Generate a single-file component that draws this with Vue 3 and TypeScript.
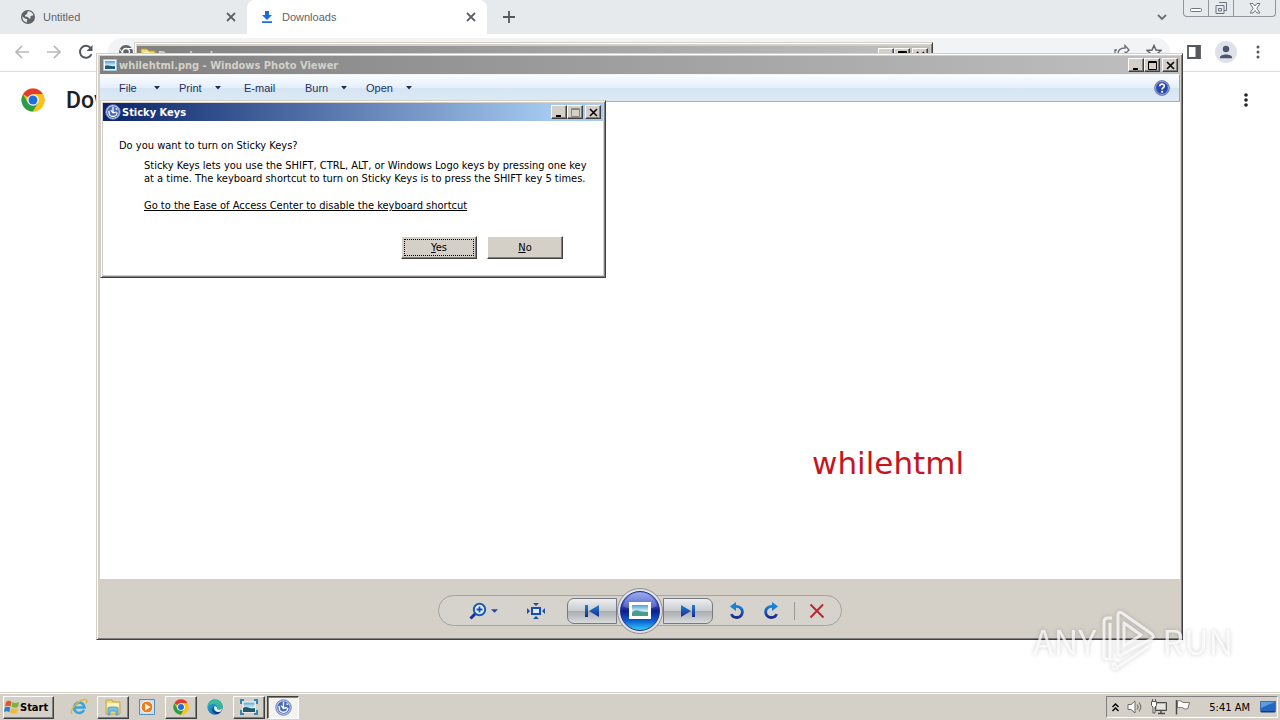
<script setup lang="ts">
interface MenuItem {
  label: string
  arrow: boolean
}

interface TaskItem {
  name: string
  icon: 'ie' | 'explorer' | 'media' | 'chrome' | 'edge' | 'photo' | 'access'
  state: 'pinned' | 'open' | 'active'
}

const menu: MenuItem[] = [
  { label: 'File', arrow: true },
  { label: 'Print', arrow: true },
  { label: 'E-mail', arrow: false },
  { label: 'Burn', arrow: true },
  { label: 'Open', arrow: true },
]

const tasks: TaskItem[] = [
  { name: 'Internet Explorer', icon: 'ie', state: 'pinned' },
  { name: 'Windows Explorer', icon: 'explorer', state: 'open' },
  { name: 'Media Player', icon: 'media', state: 'pinned' },
  { name: 'Chrome', icon: 'chrome', state: 'open' },
  { name: 'Edge', icon: 'edge', state: 'pinned' },
  { name: 'Photo Viewer', icon: 'photo', state: 'open' },
  { name: 'Sticky Keys', icon: 'access', state: 'active' },
]
</script>

<template>
  <div class="desktop">
    <svg width="0" height="0" class="defs" aria-hidden="true">
      <defs>
        <linearGradient id="orb" x1="0" y1="0" x2="0" y2="1">
          <stop offset="0" stop-color="#8a9bea" />
          <stop offset=".35" stop-color="#3346c4" />
          <stop offset=".5" stop-color="#101d8c" />
          <stop offset=".75" stop-color="#0a5fd0" />
          <stop offset="1" stop-color="#35d0ff" />
        </linearGradient>
        <linearGradient id="ink" x1="0" y1="0" x2="0" y2="1">
          <stop offset="0" stop-color="#1a80d8" />
          <stop offset="1" stop-color="#1b2a8c" />
        </linearGradient>
        <linearGradient id="pic" x1="0" y1="0" x2="0" y2="1">
          <stop offset="0" stop-color="#4d9ed6" />
          <stop offset=".55" stop-color="#d5edf5" />
          <stop offset="1" stop-color="#2c7384" />
        </linearGradient>
        <linearGradient id="edgeg" x1="0" y1="0" x2="1" y2="1">
          <stop offset="0" stop-color="#2bb6d8" />
          <stop offset="1" stop-color="#0c4fa8" />
        </linearGradient>
        <symbol id="chrome-logo" viewBox="0 0 24 24">
          <circle cx="12" cy="12" r="11.5" fill="#fbc116" />
          <path d="M12 12 2.04 6.25A11.5 11.5 0 0 1 21.96 6.25H12z" fill="#e33b2e" />
          <path d="M2.04 6.25A11.5 11.5 0 0 0 12 23.5L17 14.9 12 12 7 14.9z" fill="#2a9c4a" />
          <path d="M12 6.25h9.96A11.5 11.5 0 0 1 12 23.5L17 14.9z" fill="#fbc116" />
          <circle cx="12" cy="12" r="5.8" fill="#fff" />
          <circle cx="12" cy="12" r="4.5" fill="#1b6fe0" />
        </symbol>
        <symbol id="access-logo" viewBox="0 0 18 18">
          <circle cx="9" cy="9" r="8.2" fill="#c3cdec" stroke="#6478b5" />
          <circle cx="9" cy="9" r="6.6" fill="#4a69b5" />
          <path d="M4.5 9.5a4.5 4.5 0 0 0 9 0" fill="none" stroke="#fff" stroke-width="1.5" />
          <path d="M9 3v6M6.5 7l2.5 3 4-1M4 7.5l1 2.5M12 5l2 1" fill="none" stroke="#fff" stroke-width="1.4" />
        </symbol>
        <symbol id="photo-logo" viewBox="0 0 14 12">
          <path d="M.5.5h13v11H.5z" fill="#f2f8fb" stroke="#b4c4cf" />
          <path d="M2 2h10v8H2z" fill="url(#pic)" />
          <path d="M2 7c3-2 5 1 10 0v3H2z" fill="#1d5c78" />
        </symbol>
      </defs>
    </svg>

    <!-- browser -->
    <section class="browser">
      <div class="tabs">
        <button class="tab">
          <svg width="16" height="16" viewBox="0 0 16 16"><circle cx="8" cy="8" r="7" fill="#5f6368" /><path d="M2.3 7.5 5 9.6c1 .5 2 .2 2.3 1.2.2.8-.6 1.4-.5 2.8C4 13 2.200 10.500 2.300 7.500zM8 2.200c2.500 0 4.700 1.600 5.500 3.800-.8.9-2.500.7-3 1.500-.6.8.8 2-.4 2.300C8.900 9.900 8.800 8.300 7.600 8 6.500 7.600 5 8 5 6.700c0-1 1.400-1 2-1.600.700-.700-.300-2 1-2.900z" fill="#e7eaed" /></svg>
          <span>Untitled</span>
          <svg class="x" width="10" height="10" viewBox="0 0 10 10"><path d="m1 1 8 8M9 1 1 9" stroke="#5f6368" stroke-width="1.8" /></svg>
        </button>
        <button class="tab active">
          <svg width="16" height="16" viewBox="0 0 16 16"><path d="M6 2h4v4h3L8 11 3 6h3zM3 12.300h10V14H3z" fill="#1a6fdc" /></svg>
          <span>Downloads</span>
          <svg class="x" width="10" height="10" viewBox="0 0 10 10"><path d="m1 1 8 8M9 1 1 9" stroke="#5f6368" stroke-width="1.800" /></svg>
        </button>
        <button class="newtab" aria-label="New tab"><svg width="12" height="12" viewBox="0 0 12 12"><path d="M6 0v12M0 6h12" stroke="#55595e" stroke-width="1.800" /></svg></button>
        <button class="chev" aria-label="Search tabs"><svg width="10" height="8" viewBox="0 0 10 8"><path d="m1 2 4 4 4-4" fill="none" stroke="#6a6e73" stroke-width="1.800" /></svg></button>
        <div class="caption">
          <button aria-label="Minimize"><svg width="14" height="16" viewBox="0 0 14 16"><rect x="1.500" y="8.500" width="11" height="3" rx="1" fill="#fff" stroke="#6d7580" /></svg></button>
          <button aria-label="Restore"><svg width="14" height="16" viewBox="0 0 14 16"><path d="M5 2.500h7.500v8H10M2 5.500h8v8H2zM4.500 8.500h3v2.500h-3z" fill="none" stroke="#6d7580" /></svg></button>
          <button class="wide" aria-label="Close"><svg width="14" height="16" viewBox="0 0 14 16"><path d="M2 3.500h3L7 6l2-2.500h3L8.800 8.200 12 13H9l-2-2.500L5 13H2l3.200-4.800z" fill="#fff" stroke="#6d7580" /></svg></button>
        </div>
      </div>
      <div class="nav">
        <button aria-label="Back"><svg width="16" height="16" viewBox="0 0 16 16"><path d="M15 8H2M8 2 2 8l6 6" fill="none" stroke="#b6b8ba" stroke-width="1.700" /></svg></button>
        <button aria-label="Forward"><svg width="16" height="16" viewBox="0 0 16 16"><path d="M1 8h13M8 2l6 6-6 6" fill="none" stroke="#b6b8ba" stroke-width="1.700" /></svg></button>
        <button aria-label="Reload"><svg width="16" height="16" viewBox="0 0 16 16"><path d="M13.500 10.200A6 6 0 1 1 12.600 4" fill="none" stroke="#55595e" stroke-width="2" /><path d="M14.500 1v6h-6z" fill="#55595e" /></svg></button>
        <div class="omnibox">
          <svg width="16" height="16" viewBox="0 0 16 16"><circle cx="8" cy="8" r="7" fill="#5f6368" /><circle cx="8" cy="8" r="3.500" fill="#5f6368" stroke="#fff" stroke-width="1.400" /><path d="M8 4.500h6.500M5 10 1.800 5M11 10l-3 5" stroke="#fff" /></svg>
          <span class="grow"></span>
          <svg width="16" height="16" viewBox="0 0 16 16"><path d="M3 6H1v8h11v-3M4 10c0-4 3-6 7-6V1.500L15 6l-4 4V7.500" fill="none" stroke="#6a6e73" stroke-width="1.300" /></svg>
          <svg width="16" height="16" viewBox="0 0 16 16"><path d="m8 1.500 2 4.500 5 .5-3.800 3.300 1.200 4.900L8 12l-4.400 2.700 1.200-4.900L1 6.500 6 6z" fill="none" stroke="#5f6368" stroke-width="1.500" /></svg>
        </div>
        <button aria-label="Side panel"><svg width="16" height="16" viewBox="0 0 16 16"><path d="M2 2h12v12H2z" fill="#fff" stroke="#55595e" stroke-width="1.800" /><path d="M9.500 2H14v12H9.500z" fill="#55595e" /></svg></button>
        <button class="avatar" aria-label="Profile"><svg width="22" height="22" viewBox="0 0 22 22"><circle cx="11" cy="11" r="11" fill="#dfe2e8" /><circle cx="11" cy="8" r="3.200" fill="#4c5670" /><path d="M5 16.500c0-4 12-4 12 0v.7H5z" fill="#4c5670" /></svg></button>
        <button aria-label="Menu"><svg width="16" height="16" viewBox="0 0 16 16"><g fill="#55595e"><circle cx="8" cy="3" r="1.500" /><circle cx="8" cy="8" r="1.500" /><circle cx="8" cy="13" r="1.500" /></g></svg></button>
      </div>
      <header class="page">
        <svg width="24" height="24"><use href="#chrome-logo" /></svg>
        <h1>Downloads</h1>
        <button aria-label="More actions"><svg width="16" height="16" viewBox="0 0 16 16"><g fill="#222"><circle cx="8" cy="3" r="1.800" /><circle cx="8" cy="8" r="1.800" /><circle cx="8" cy="13" r="1.800" /></g></svg></button>
      </header>
    </section>

    <!-- folder window -->
    <section class="win folder">
      <div class="titlebar idle">
        <svg width="16" height="14" viewBox="0 0 16 14"><path d="M1 1h6l2 2h6v11H1z" fill="#f3dc7c" stroke="#b99a34" /><path d="M4 4h5v9H4z" fill="#fff4b8" /></svg>
        <span>Downloads</span>
        <div class="sys">
          <button aria-label="Minimize"><svg width="9" height="9" viewBox="0 0 9 9"><path d="M1 7h5v2H1z" /></svg></button>
          <button aria-label="Maximize"><svg width="9" height="9" viewBox="0 0 9 9"><path d="M.5.5h8v8h-8zM0 1.500h9" fill="none" stroke="#000" /></svg></button>
          <button class="close" aria-label="Close"><svg width="9" height="9" viewBox="0 0 9 9"><path d="m1 1 7 7M8 1 1 8" stroke="#000" stroke-width="1.600" /></svg></button>
        </div>
      </div>
    </section>

    <!-- photo viewer -->
    <section class="win viewer">
      <div class="titlebar idle">
        <svg width="14" height="12"><use href="#photo-logo" /></svg>
        <span>whilehtml.png - Windows Photo Viewer</span>
        <div class="sys">
          <button aria-label="Minimize"><svg width="9" height="9" viewBox="0 0 9 9"><path d="M1 7h5v2H1z" /></svg></button>
          <button aria-label="Maximize"><svg width="9" height="9" viewBox="0 0 9 9"><path d="M.5.5h8v8h-8zM0 1.500h9" fill="none" stroke="#000" /></svg></button>
          <button class="close" aria-label="Close"><svg width="9" height="9" viewBox="0 0 9 9"><path d="m1 1 7 7M8 1 1 8" stroke="#000" stroke-width="1.600" /></svg></button>
        </div>
      </div>
      <nav class="menubar">
        <button v-for="item in menu" :key="item.label">
          <span>{{ item.label }}</span>
          <svg v-if="item.arrow" width="6" height="4" viewBox="0 0 6 4"><path d="M0 0h6L3 3.500z" fill="#1e2f55" /></svg>
        </button>
        <button class="help" aria-label="Help">
          <svg width="16" height="16" viewBox="0 0 16 16"><circle cx="8" cy="8" r="7.400" fill="#2a49ad" stroke="#7c88a8" /><circle cx="8" cy="8" r="6.400" fill="none" stroke="#b9c6ee" stroke-width=".8" /><path d="M5.700 6.200c0-3 4.800-2.700 4.600 0-.1 1.500-2.200 1.500-2.200 3.300" fill="none" stroke="#fff" stroke-width="1.700" /><circle cx="8.100" cy="11.800" r="1.100" fill="#fff" /></svg>
        </button>
      </nav>
      <div class="canvas"><p>whilehtml</p></div>
      <footer class="controls">
        <div class="pill">
          <button class="zoom" aria-label="Zoom">
            <svg width="18" height="18" viewBox="0 0 18 18"><path d="m1.500 16.500 5-5" stroke="#1c2f94" stroke-width="3" /><circle cx="10.500" cy="7.500" r="5.700" fill="#e4f0fb" stroke="#1c5cb8" stroke-width="2" /><path d="M10.500 4.500v6M7.500 7.500h6" stroke="#1c4fb0" stroke-width="1.800" /></svg>
            <svg width="7" height="4" viewBox="0 0 8 4"><path d="M0 0h8L4 4z" fill="#1e4aa5" /></svg>
          </button>
          <button class="fit" aria-label="Actual size"><svg width="18" height="16" viewBox="0 0 18 16"><path d="M5 5h8v6H5z" fill="#dcebfa" stroke="#1c4fb0" stroke-width="2" /><path d="M6 0h6L9 3zM6 16h6l-3-3zM0 5v6l3-3zM18 5v6l-3-3z" fill="#1f4fa8" /></svg></button>
          <button class="step prev" aria-label="Previous"><svg width="16" height="12" viewBox="0 0 16 12"><path d="M1 0h3v12H1zM15 0v12L5 6z" fill="url(#ink)" /></svg></button>
          <button class="orb" aria-label="Play slide show"><svg width="46" height="46" viewBox="0 0 46 46"><circle cx="23" cy="23" r="22.500" fill="#e2e3e6" stroke="#8b8e96" /><circle cx="23" cy="23" r="19.500" fill="url(#orb)" stroke="#26347e" /><path d="M6 18a17.500 17.500 0 0 1 34 0c-9 5-25 5-34 0z" fill="#fff" opacity=".22" /><path d="M12 14h22v17H12z" fill="#fff" /><path d="M15 17h16v11H15z" fill="url(#pic)" /><path d="M15 25c4-6 7 0 16-1v4H15z" fill="#4a9c8c" /></svg></button>
          <button class="step next" aria-label="Next"><svg width="16" height="12" viewBox="0 0 16 12"><path d="M12 0h3v12h-3zM1 0v12l10-6z" fill="url(#ink)" /></svg></button>
          <button aria-label="Rotate counterclockwise"><svg width="16" height="18" viewBox="0 0 16 18"><path d="M6 4.500c10-1 9 11 2 11-3 0-5-1.500-5.500-3.500" fill="none" stroke="url(#ink)" stroke-width="2.800" /><path d="M7 0v9L1 4.500z" fill="#1a80d8" /></svg></button>
          <button aria-label="Rotate clockwise"><svg width="16" height="18" viewBox="0 0 16 18"><path d="M10 4.500c-10-1-9 11-2 11 3 0 5-1.500 5.500-3.500" fill="none" stroke="url(#ink)" stroke-width="2.800" /><path d="M9 0v9l6-4.500z" fill="#1a80d8" /></svg></button>
          <span class="sep"></span>
          <button aria-label="Delete"><svg width="16" height="16" viewBox="0 0 16 16"><path d="m1.500 1.500 13 13M14 1.500l-12.500 13" stroke="#bd2831" stroke-width="2" /></svg></button>
        </div>
      </footer>
    </section>

    <!-- sticky keys dialog -->
    <section class="win dialog" role="dialog" aria-labelledby="sk-title">
      <div class="titlebar">
        <svg width="16" height="16"><use href="#access-logo" /></svg>
        <span id="sk-title">Sticky Keys</span>
        <div class="sys">
          <button aria-label="Minimize"><svg width="9" height="9" viewBox="0 0 9 9"><path d="M1 7h5v2H1z" /></svg></button>
          <button aria-label="Maximize" disabled><svg width="9" height="9" viewBox="0 0 9 9"><path d="M.5.500h8v8h-8zM0 1.500h9" fill="none" stroke="#8a8780" /></svg></button>
          <button class="close" aria-label="Close"><svg width="9" height="9" viewBox="0 0 9 9"><path d="m1 1 7 7M8 1 1 8" stroke="#000" stroke-width="1.600" /></svg></button>
        </div>
      </div>
      <div class="body">
        <p>Do you want to turn on Sticky Keys?</p>
        <div class="detail">
          <p>Sticky Keys lets you use the SHIFT, CTRL, ALT, or Windows Logo keys by pressing one key<br />at a time. The keyboard shortcut to turn on Sticky Keys is to press the SHIFT key 5 times.</p>
          <a href="#">Go to the Ease of Access Center to disable the keyboard shortcut</a>
        </div>
        <div class="actions">
          <button class="focused"><span><u>Y</u>es</span></button>
          <button><span><u>N</u>o</span></button>
        </div>
      </div>
    </section>

    <!-- taskbar -->
    <footer class="taskbar">
      <button class="start">
        <svg width="16" height="16" viewBox="0 0 16 16"><path d="M2 3c2-1.500 3.500-1.500 5.500-.3L6.500 7.500C4.500 6.300 3 6.500 1 7.500z" fill="#e2572a" /><path d="M8.500 3c2 1.200 4 1.200 6.500 0l-1 4.800c-2.500 1.200-4.500 1-6.500 0z" fill="#78b43c" /><path d="M.8 8.500c2-1.200 3.700-1 5.500 0l-1 4.800C3.500 12 2 12.200 0 13z" fill="#2f7cd0" /><path d="M7.300 9c2 1.200 4 1.200 6.500 0l-1 4.800c-2.500 1.200-4.500 1-6.500 0z" fill="#f2b92d" /></svg>
        <b>Start</b>
      </button>
      <div class="tasks">
        <button v-for="t in tasks" :key="t.name" :class="t.state" :aria-label="t.name">
          <svg v-if="t.icon === 'ie'" width="18" height="18" viewBox="0 0 18 18"><path d="M14 12a5.200 5.200 0 1 1 .5-2.500H5" fill="none" stroke="#35a5e0" stroke-width="2.600" /><path d="M2 16C-1 12 9 1 16 1.500c1.500.5 1 2.500 0 4" fill="none" stroke="#e3b52e" stroke-width="1.300" /></svg>
          <svg v-else-if="t.icon === 'explorer'" width="18" height="18" viewBox="0 0 18 18"><path d="M2 2h6l1 2h7v12H2z" fill="#efd67a" stroke="#c6a64a" /><path d="M3 5h12v4H3z" fill="#fff3bd" /><path d="M4 17v-6q0-2 2-2h6q2 0 2 2v6h-2v-4H6v4z" fill="#77bfe6" stroke="#4b97c4" stroke-width=".8" /></svg>
          <svg v-else-if="t.icon === 'media'" width="16" height="16" viewBox="0 0 16 16"><path d="M.5.500h15v15H.500z" fill="#c9dff0" stroke="#4f8fc2" /><circle cx="8" cy="8" r="6" fill="#ef7b1a" stroke="#fff" /><path d="M6 4.500v7L11.500 8z" fill="#fff" /></svg>
          <svg v-else-if="t.icon === 'chrome'" width="16" height="16"><use href="#chrome-logo" /></svg>
          <svg v-else-if="t.icon === 'edge'" width="16" height="16" viewBox="0 0 16 16"><circle cx="8" cy="8" r="7.700" fill="url(#edgeg)" /><path d="M1 6c2-6 14-8 14.700 1.500 0 3-3.500 3.700-5.500 2.500C11 7.500 9 5 6 5 3.500 5 1.500 6 .5 8z" fill="#46c88c" opacity=".75" /><path d="M6.500 8c-1 4 3 6 7.500 4.500-1 1-2 2-4 2.500C5 14 4 9.500 6.500 8z" fill="#0b3b86" /><path d="M7 8.500c.5-2 3-1.500 3.200 1.500 1.500 1 3.500.8 5-.5l-1.500 3c-3 1.300-6.500 0-6.700-4z" fill="#e5f4fa" /></svg>
          <svg v-else-if="t.icon === 'photo'" width="18" height="16" viewBox="0 0 18 16"><path d="M0 0h4v2H2v3H0zM14 0h4v5h-2V2h-2zM0 11h2v3h2v2H0zM16 11h2v5h-4v-2h2z" fill="#3489ad" /><path d="M3 3h12v10H3z" fill="url(#pic)" stroke="#fff" /><path d="M3 9c4-3 7 2 12 0v4H3z" fill="#205b70" /></svg>
          <svg v-else width="17" height="17"><use href="#access-logo" /></svg>
        </button>
      </div>
      <div class="tray">
        <svg width="7" height="9" viewBox="0 0 7 9"><path d="m.5 4 3-3 3 3M.5 8l3-3 3 3" fill="none" stroke="#000" stroke-width="1.400" /></svg>
        <svg width="16" height="16" viewBox="0 0 16 16"><path d="M1 5.500h3L8 2v12l-4-3.500H1z" fill="#fff" stroke="#6c6a66" /><path d="M10 5.500q2 2.500 0 5M12 3.500q3.500 4.500 0 9" fill="none" stroke="#77746e" stroke-width="1.200" /></svg>
        <svg width="16" height="16" viewBox="0 0 16 16"><path d="M4.500 3.500h11v8h-11z" fill="#b9b6b0" stroke="#4d4b48" /><path d="M6 5h8v5H6z" fill="#e8e6e1" /><path d="M7 14.500h7M10 12v2" stroke="#4d4b48" stroke-width="1.500" /><path d="M.500 2.500h5v4L4 8v6H2V8L.500 6.500zM1.500 0v3M4.500 0v3" fill="#fff" stroke="#5b5955" /></svg>
        <svg width="16" height="16" viewBox="0 0 16 16"><path d="M1.500 1v14.500" stroke="#4d4b48" stroke-width="1.500" /><path d="M2.500 2c3-1 4 .5 5.500 1.500h6.500L13 9.500c-2 .7-3.500.8-5-.5-2-1-3.500-.8-5.500 0z" fill="#fff" stroke="#77746e" /></svg>
        <time>5:41 AM</time>
        <svg width="16" height="14" viewBox="0 0 16 14"><path d="M.5 1.500h15v10H.5z" fill="#2367bf" stroke="#4c6ea0" /><path d="M1 2h14L1 8z" fill="#5c9be0" /><path d="M1 11h14v1.500H1z" fill="#173a72" /></svg>
      </div>
    </footer>

    <div class="watermark" aria-hidden="true">
      <span>ANY</span>
      <svg width="58" height="64" viewBox="0 0 58 64"><path d="M12 9H8q-4 0-4 4v34q0 3 3 3h3V14M18 6q0-4 4-2l30 21q3 3-1 5L21 46q-3 1-3-2zM24 14v23l17-11zM13 54l5 4 31-21M13 54v5q2 2 5 0" fill="none" stroke="#fff" stroke-opacity=".75" stroke-width="3" stroke-linejoin="round" /></svg>
      <span>RUN</span>
    </div>
  </div>
</template>

<style>
html,
body {
  margin: 0;
  background: #fff;
}
</style>

<style scoped>
* {
  box-sizing: border-box;
}
.desktop {
  position: relative;
  display: flex;
  flex-direction: column;
  min-height: 100vh;
  overflow: hidden;
  background: #fff;
  color: #000;
  font-family: "DejaVu Sans Condensed", "DejaVu Sans", sans-serif;
  font-size: 11px;
}
.defs {
  position: absolute;
}
button {
  display: flex;
  align-items: center;
  justify-content: center;
  margin: 0;
  padding: 0;
  border: 0;
  background: none;
  color: inherit;
  font: inherit;
}
svg {
  display: block;
  flex: none;
}
p,
h1 {
  margin: 0;
}

.browser {
  flex: 1;
  font-family: "Liberation Sans", Arial, sans-serif;
}
.tabs {
  display: flex;
  align-items: center;
  height: 34px;
  background: #e7eaed;
}
.tab {
  justify-content: flex-start;
  gap: 7px;
  width: 240px;
  height: 34px;
  padding: 0 11px 0 12px;
  color: #5f6368;
}
.tab:first-child {
  width: 247px;
  padding-left: 20px;
}
.tab.active {
  border-radius: 8px 8px 0 0;
  background: #fff;
}
.x {
  margin-left: auto;
}
.newtab {
  width: 44px;
}
.chev {
  margin-left: auto;
  margin-right: 16px;
}
.caption {
  display: flex;
  align-self: flex-start;
  height: 17px;
  margin-right: 4px;
  border: 1px solid #8f969e;
  border-top: 0;
  border-radius: 0 0 4px 4px;
}
.caption button {
  width: 25px;
  border-right: 1px solid #8f969e;
}
.caption .wide {
  width: 41px;
  border-right: 0;
}
.nav {
  display: flex;
  align-items: center;
  gap: 16px;
  height: 38px;
  padding: 0 14px 2px;
  border-bottom: 1px solid #dadce0;
}
.omnibox {
  display: flex;
  flex: 1;
  align-items: center;
  gap: 16px;
  height: 28px;
  margin-left: -2px;
  padding: 0 8px 0 10px;
  border-radius: 14px;
  background: #f1f3f4;
}
.grow {
  flex: 1;
}
.avatar {
  margin: 0 -3px;
}
.page {
  display: flex;
  align-items: center;
  gap: 21px;
  height: 56px;
  padding: 0 26px 0 21px;
}
.page h1 {
  flex: 1;
  color: #202124;
  font: 500 23px Roboto, sans-serif;
}

.win {
  position: absolute;
  display: flex;
  flex-direction: column;
  padding: 2px;
  border: 1px solid;
  border-color: #d4d0c8 #404040 #404040 #d4d0c8;
  background: #d4d0c8;
  box-shadow: inset 1px 1px #fff, inset -1px -1px #808080;
}
.folder {
  top: 42px;
  right: 347px;
  left: 134px;
  height: 120px;
  padding-top: 3px;
}
.viewer {
  top: 53px;
  right: 97px;
  bottom: 80px;
  left: 96px;
  padding: 2px 2px 1px 3px;
}
.titlebar {
  display: flex;
  flex: none;
  align-items: center;
  gap: 2px;
  height: 18px;
  padding: 0 2px 0 3px;
  background: linear-gradient(90deg, #0a246a, #a6caf0 90%);
  color: #fff;
  font-weight: bold;
}
.idle {
  background: linear-gradient(90deg, #808080, #c0c0c0);
  color: #d4d0c8;
}
.dialog .titlebar {
  gap: 1px;
  padding-left: 2px;
}
.sys {
  display: flex;
  margin-left: auto;
}
.sys button {
  width: 16px;
  height: 14px;
  border: 1px solid;
  border-color: #fff #404040 #404040 #fff;
  background: #d4d0c8;
  box-shadow: inset -1px -1px #808080;
}
.sys .close {
  margin-left: 2px;
}
.menubar {
  display: grid;
  flex: none;
  grid-template-columns: 60px 65px 61px 61px 61px 1fr;
  height: 28px;
  padding: 0 9px 1px 19px;
  border-top: 1px solid #f4f4f4;
  border-right: 1px solid #98a8ba;
  border-bottom: 1px solid #a0afc3;
  background: linear-gradient(#fafdff, #e5effa 48%, #d6e5f3 52%, #dce9f5);
  color: #1e3264;
  font-family: "Liberation Sans", Arial, sans-serif;
}
.menubar button {
  justify-content: flex-start;
  gap: 13px;
}
.menubar span {
  min-width: 22px;
  text-align: left;
}
.menubar .help {
  justify-self: end;
}
.canvas {
  display: flex;
  flex: 1;
  align-items: flex-end;
  justify-content: flex-end;
  padding: 0 20% 96px 0;
  background: #fff;
}
.canvas p {
  color: #c4161c;
  font: 31px/40px "DejaVu Sans", Verdana, sans-serif;
}
.controls {
  display: flex;
  flex: none;
  align-items: center;
  justify-content: center;
  height: 59px;
  padding-top: 4px;
}
.pill {
  display: grid;
  grid-template-rows: 29px;
  grid-template-columns: 88px 40px 50px 46px 50px 48px 20px 26px 20px;
  align-items: center;
  justify-items: center;
  width: 404px;
  height: 31px;
  border: 1px solid #a5a39d;
  border-radius: 16px;
  background: #d6d3cc;
}
.zoom {
  gap: 4px;
}
.fit {
  justify-self: start;
}
.step {
  width: 50px;
  height: 26px;
  border: 1px solid #777a80;
  background: linear-gradient(#eceef0, #c9cccf 48%, #a9adb1 52%, #d9dbdd);
}
.prev {
  border-radius: 7px 0 0 7px;
}
.next {
  border-radius: 0 7px 7px 0;
}
.orb {
  z-index: 1;
}
.sep {
  width: 1px;
  height: 18px;
  background: #9b9993;
}

.dialog {
  top: 100px;
  left: 100px;
  width: 506px;
}
.body {
  padding: 18px 40px 16px 16px;
  background: #fff;
  line-height: 13px;
}
.detail {
  margin: 7px 0 0 25px;
  white-space: nowrap;
}
.detail a {
  display: inline-block;
  margin-top: 14px;
  color: #000;
}
.actions {
  display: flex;
  gap: 10px;
  justify-content: flex-end;
  margin-top: 24px;
}
.actions button {
  width: 76px;
  height: 23px;
  padding: 2px;
  border: 1px solid;
  border-color: #fff #404040 #404040 #fff;
  background: #d4d0c8;
  box-shadow: inset -1px -1px #808080;
}
.actions span {
  flex: 1;
  border: 1px dotted transparent;
  line-height: 15px;
}
.actions .focused span {
  border-color: #000;
}

.taskbar {
  display: flex;
  align-items: center;
  height: 28px;
  padding: 1px 2px 0 3px;
  border-top: 1px solid #d4d0c8;
  background: #d4d0c8;
  box-shadow: inset 0 1px #fff;
}
.start {
  justify-content: flex-start;
  width: 51px;
  height: 23px;
  border: 1px solid;
  border-color: #fff #404040 #404040 #fff;
  box-shadow: inset -1px -1px #808080;
}
.tasks {
  display: flex;
  gap: 2px;
  margin-left: 9px;
}
.tasks button {
  width: 32px;
  height: 23px;
  border: 1px solid transparent;
}
.tasks .open {
  border-color: #fff #404040 #404040 #fff;
  box-shadow: inset -1px -1px #808080;
}
.tasks .active {
  border-color: #404040 #fff #fff #404040;
  background: #f4f3f0;
  box-shadow: inset 1px 1px #808080;
}
.tray {
  display: flex;
  align-items: center;
  gap: 8px;
  height: 22px;
  margin-left: auto;
  padding: 0 1px 0 5px;
  border: 1px solid;
  border-color: #808080 #fff #fff #808080;
}
.tray time {
  margin: 0 2px 0 10px;
}

.watermark {
  position: absolute;
  right: 47px;
  bottom: 47px;
  display: flex;
  align-items: center;
  gap: 4px;
  color: rgba(255, 255, 255, 0.75);
  font: 34px/64px "Noto Sans CJK JP", sans-serif;
  filter: drop-shadow(0 0 2px rgba(0, 0, 0, 0.25));
  pointer-events: none;
}
</style>
